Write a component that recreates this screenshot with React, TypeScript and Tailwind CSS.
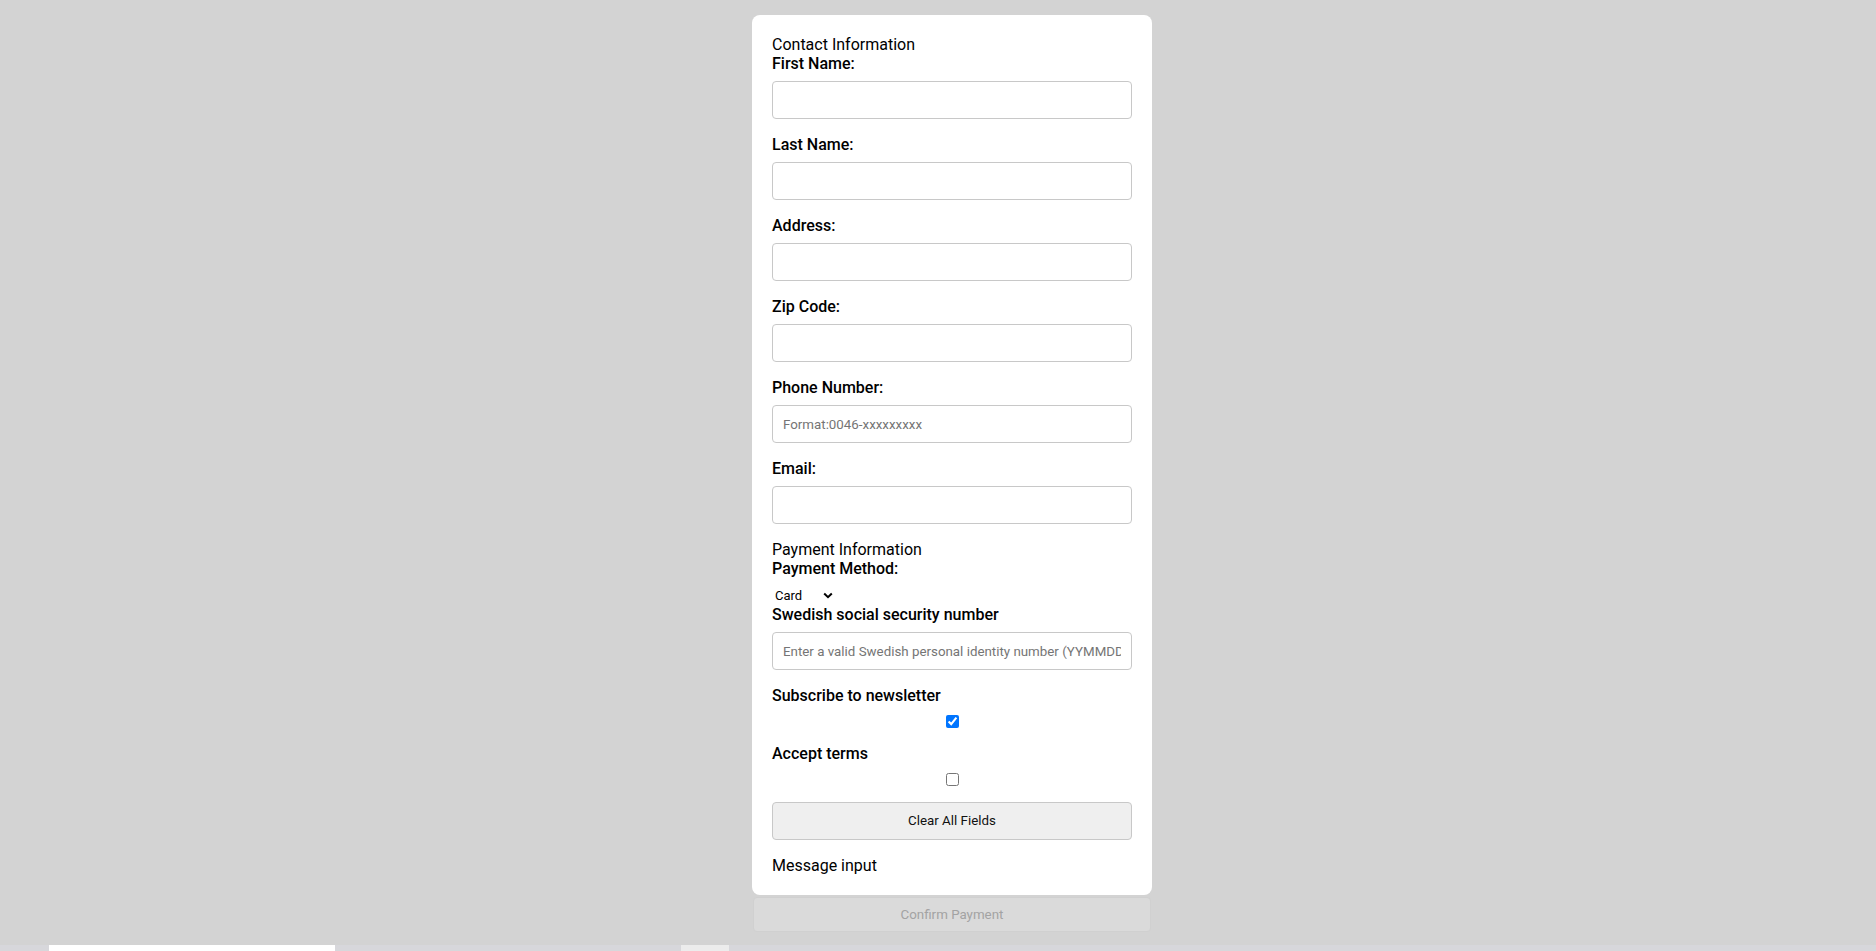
import { useState } from "react";

const font = { fontFamily: "Roboto, 'Liberation Sans', sans-serif" };

function Field({ label, placeholder }: { label: string; placeholder?: string }) {
  return (
    <div className="flex flex-col mb-4">
      <label className="text-[16px] leading-[19px] font-medium text-black">{label}</label>
      <input
        type="text"
        placeholder={placeholder}
        className="mt-2 h-[38px] w-full rounded-[4px] border border-[#c8c8c8] bg-white px-[10px] text-[13.333px] text-black placeholder:text-[#757575] outline-none"
      />
    </div>
  );
}

function CheckRow({ label, checked }: { label: string; checked?: boolean }) {
  return (
    <div className="flex flex-col mb-4">
      <label className="text-[16px] leading-[19px] font-medium text-black">{label}</label>
      <div className="mt-[10px] flex h-[13px] justify-center">
        <input
          type="checkbox"
          defaultChecked={checked}
          className="m-0 h-[13px] w-[13px] accent-[#0075ff]"
        />
      </div>
    </div>
  );
}

export default function App() {
  const [method, setMethod] = useState("card");

  return (
    <div className="min-h-screen bg-[#d3d3d3] flex flex-col" style={font}>
      <div className="flex flex-col items-center pt-[15px] pl-[28px]">
        <form className="w-[400px] rounded-lg bg-white p-5 flex flex-col">
          <h2 className="text-[16px] leading-[19px] font-normal text-black">Contact Information</h2>
          <Field label="First Name:" />
          <Field label="Last Name:" />
          <Field label="Address:" />
          <Field label="Zip Code:" />
          <Field label="Phone Number:" placeholder="Format:0046-xxxxxxxxx" />
          <Field label="Email:" />

          <h2 className="text-[16px] leading-[19px] font-normal text-black">Payment Information</h2>
          <label className="text-[16px] leading-[19px] font-medium text-black">Payment Method:</label>
          <div className="mt-2 flex items-center h-[19px] w-[64px]">
            <select
              value={method}
              onChange={(e) => setMethod(e.target.value)}
              className="appearance-none border-0 bg-transparent pl-[3px] text-[13px] leading-[19px] text-black outline-none w-[48px]"
            >
              <option value="card">Card</option>
              <option value="invoice">Invoice</option>
            </select>
            <svg width="10" height="7" viewBox="0 0 10 7" className="ml-[3px]">
              <path d="M1.2 1.5 L5 5.2 L8.8 1.5" fill="none" stroke="#000" strokeWidth="2" />
            </svg>
          </div>

          <Field
            label="Swedish social security number"
            placeholder="Enter a valid Swedish personal identity number (YYMMDDXXXX)"
          />
          <CheckRow label="Subscribe to newsletter" checked />
          <CheckRow label="Accept terms" />

          <button
            type="button"
            className="h-[38px] w-full rounded-[4px] border border-[#c8c8c8] bg-[#efefef] text-[13.333px] text-[#111]"
          >
            Clear All Fields
          </button>
          <p className="mt-4 text-[16px] leading-[19px] text-black">Message input</p>
        </form>

        <button
          type="button"
          disabled
          className="mt-[2px] h-[35px] w-[398px] rounded-[4px] border border-[#d0d0d0] bg-[#dadada] text-[13.333px] text-[#a3a3a3]"
        >
          Confirm Payment
        </button>
      </div>

      <div className="mt-[13px] flex h-[6px] bg-[#d7d7db]">
        <div className="ml-[49px] w-[286px] bg-white" />
        <div className="ml-[346px] w-[48px] bg-[#ececec]" />
      </div>
    </div>
  );
}
